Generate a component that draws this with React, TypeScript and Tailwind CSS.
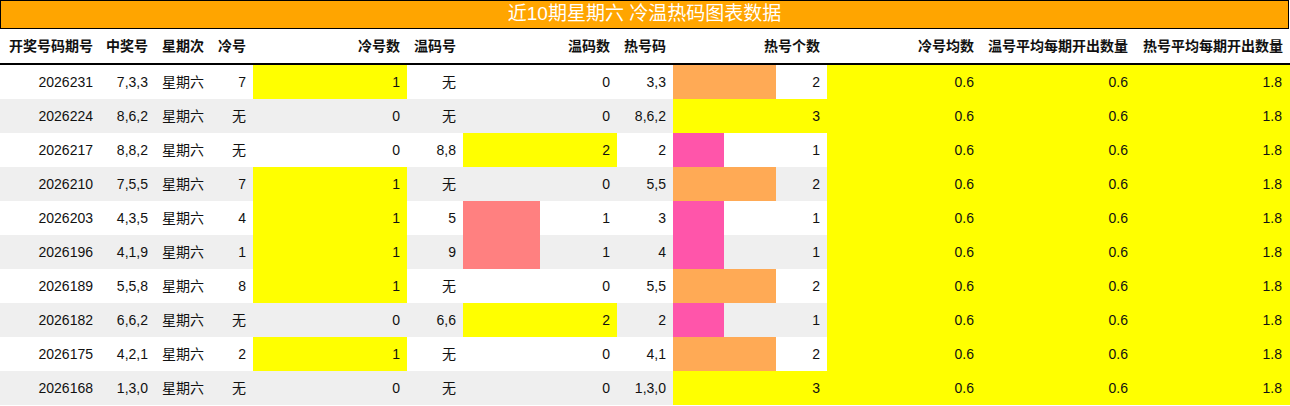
const rows = [
  { qi: "2026231", zj: "7,3,3", leng: "7", lengN: 1, wen: "无", wenN: 0, re: "3,3", reN: 2 },
  { qi: "2026224", zj: "8,6,2", leng: "无", lengN: 0, wen: "无", wenN: 0, re: "8,6,2", reN: 3 },
  { qi: "2026217", zj: "8,8,2", leng: "无", lengN: 0, wen: "8,8", wenN: 2, re: "2", reN: 1 },
  { qi: "2026210", zj: "7,5,5", leng: "7", lengN: 1, wen: "无", wenN: 0, re: "5,5", reN: 2 },
  { qi: "2026203", zj: "4,3,5", leng: "4", lengN: 1, wen: "5", wenN: 1, re: "3", reN: 1 },
  { qi: "2026196", zj: "4,1,9", leng: "1", lengN: 1, wen: "9", wenN: 1, re: "4", reN: 1 },
  { qi: "2026189", zj: "5,5,8", leng: "8", lengN: 1, wen: "无", wenN: 0, re: "5,5", reN: 2 },
  { qi: "2026182", zj: "6,6,2", leng: "无", lengN: 0, wen: "6,6", wenN: 2, re: "2", reN: 1 },
  { qi: "2026175", zj: "4,2,1", leng: "2", lengN: 1, wen: "无", wenN: 0, re: "4,1", reN: 2 },
  { qi: "2026168", zj: "1,3,0", leng: "无", lengN: 0, wen: "无", wenN: 0, re: "1,3,0", reN: 3 },
];

const grid =
  "grid grid-cols-[100px_55px_56px_42px_154px_56px_154px_56px_154px_154px_154px_155px]";

function barColor(ratio: number) {
  if (ratio >= 1) return "bg-[#ffff00]";
  if (ratio >= 0.6) return "bg-[#ffaa55]";
  if (ratio >= 0.45) return "bg-[#ff8080]";
  return "bg-[#ff55aa]";
}

function BarCell({ value, max }: { value: number; max: number }) {
  const ratio = value / max;
  return (
    <div className="grid h-full">
      <div
        className={`col-start-1 row-start-1 h-full ${value > 0 ? barColor(ratio) : ""}`}
        style={{ width: `${ratio * 100}%` }}
      />
      <div className="col-start-1 row-start-1 self-center px-[7px] text-right">{value}</div>
    </div>
  );
}

function Cell({ children, left }: { children: React.ReactNode; left?: boolean }) {
  return (
    <div className={`flex items-center px-[7px] ${left ? "justify-start" : "justify-end"}`}>{children}</div>
  );
}

export default function App() {
  const heads = [
    "开奖号码期号",
    "中奖号",
    "星期次",
    "冷号",
    "冷号数",
    "温码号",
    "温码数",
    "热号码",
    "热号个数",
    "冷号均数",
    "温号平均每期开出数量",
    "热号平均每期开出数量",
  ];

  return (
    <div className="w-[1290px] bg-white text-[14px] text-[#111] font-['Liberation_Sans','Noto_Sans_CJK_SC',sans-serif]">
      <div className="flex h-[29px] w-[1289px] items-center justify-center border border-black bg-[#ffa500] text-[19px] text-white">
        近10期星期六 冷温热码图表数据
      </div>

      <div className={`${grid} h-[36px] border-b-2 border-black font-bold`}>
        {heads.map((h, i) => (
          <div
            key={h}
            className={`flex items-center whitespace-nowrap px-[7px] ${i === 2 ? "justify-start" : "justify-end"} ${i === 0 ? "pl-[8px]" : ""}`}
          >
            {h}
          </div>
        ))}
      </div>

      {rows.map((r, i) => (
        <div key={r.qi} className={`${grid} h-[34px] ${i % 2 === 1 ? "bg-[#efefef]" : "bg-white"}`}>
          <Cell>{r.qi}</Cell>
          <Cell>{r.zj}</Cell>
          <Cell left>星期六</Cell>
          <Cell>{r.leng}</Cell>
          <BarCell value={r.lengN} max={1} />
          <Cell>{r.wen}</Cell>
          <BarCell value={r.wenN} max={2} />
          <Cell>{r.re}</Cell>
          <BarCell value={r.reN} max={3} />
          <div className="flex items-center justify-end bg-[#ffff00] px-[7px]">0.6</div>
          <div className="flex items-center justify-end bg-[#ffff00] px-[7px]">0.6</div>
          <div className="flex items-center justify-end bg-[#ffff00] px-[8px]">1.8</div>
        </div>
      ))}
    </div>
  );
}
